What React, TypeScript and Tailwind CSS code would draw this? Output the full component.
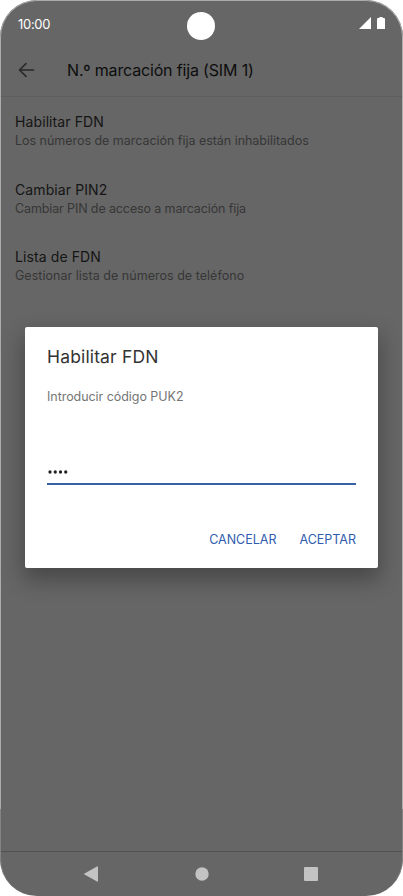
type Setting = {
  title: string
  summary: string
  summaryClass: string
}

const SETTINGS: Setting[] = [
  {
    title: 'Habilitar FDN',
    summary: 'Los números de marcación fija están inhabilitados',
    summaryClass: 'tracking-[-0.03px]',
  },
  {
    title: 'Cambiar PIN2',
    summary: 'Cambiar PIN de acceso a marcación fija',
    summaryClass: 'tracking-[-0.12px]',
  },
  {
    title: 'Lista de FDN',
    summary: 'Gestionar lista de números de teléfono',
    summaryClass: 'tracking-[0.03px]',
  },
]

function StatusBar() {
  return (
    <div className="flex h-12 shrink-0 items-center justify-between px-[18px] text-white">
      <span className="w-[60px] text-[13px] leading-4 tracking-[-0.3px]">10:00</span>
      <svg className="mt-[3px] size-7" viewBox="0 0 28 28" fill="currentColor">
        <circle cx="14" cy="14" r="14" />
      </svg>
      <span className="mt-[-2px] flex w-[61px] items-center justify-end gap-[6.5px]">
        <svg className="h-3 w-[12px]" viewBox="0 0 12 12" fill="currentColor">
          <path d="M12 0v12H0z" />
        </svg>
        <svg className="h-3 w-2" viewBox="0 0 8 12" fill="currentColor">
          <path d="M2.3 0h3.4v1H7q1 0 1 1v9.500q0 .5-.5.5h-7q-.5 0-.5-.5V2q0-1 1-1h1.300z" />
        </svg>
      </span>
    </div>
  )
}

function AppBar() {
  return (
    <header className="flex h-[49px] shrink-0 items-center border-b border-[#5e5e5e] pl-[18px]">
      <svg
        className="mt-[-5px] h-4 w-[17px] text-[#292929]"
        viewBox="0 0 17 16"
        fill="none"
        stroke="currentColor"
        strokeWidth="1.6"
        strokeLinecap="round"
        strokeLinejoin="round"
      >
        <path d="M15.500 8H2M8 1.600 1.500 8l6.500 6.400" />
      </svg>
      <h1 className="mt-[-4px] ml-8 text-[16px] leading-5 tracking-[-0.16px] whitespace-nowrap text-[#0d0d0d]">
        N.º marcación fija (SIM 1)
      </h1>
    </header>
  )
}

function Dialog() {
  return (
    <div className="absolute top-[326.5px] left-[25px] flex h-[241px] w-[353px] flex-col rounded-[2px] bg-white px-[22px] shadow-[0_10px_22px_2px_rgba(0,0,0,0.3)]">
      <h2 className="mt-[19px] text-[17.5px] leading-[22px] tracking-[0.15px] text-[#333]">Habilitar FDN</h2>
      <p className="mt-[21px] text-[12.5px] leading-4 tracking-[-0.05px] text-[#757575]">Introducir código PUK2</p>
      <div className="mt-[51px] flex h-[29px] w-[309px] items-end border-b-2 border-[#3860a6] pb-[9px]">
        <svg className="h-1 w-[22px] text-[#222]" viewBox="0 0 22 4" fill="currentColor">
          {[3, 8.25, 13.5, 18.75].map((cx) => (
            <circle key={cx} cx={cx} cy="2" r="1.65" />
          ))}
        </svg>
      </div>
      <div className="mt-[47px] flex justify-end gap-[23px] text-[12.5px] leading-4 text-[#2f5cae]">
        <button type="button">CANCELAR</button>
        <button type="button">ACEPTAR</button>
      </div>
    </div>
  )
}

function NavBar() {
  return (
    <nav className="flex h-[45px] shrink-0 items-center border-t border-[#525252] pb-px pl-[84px] text-[#c3c3c3]">
      <svg className="h-4 w-[14px]" viewBox="0 0 14 16" fill="currentColor">
        <path d="M13 .5q1-.5 1 .7v13.600q0 1.200-1 .7L.5 8.600q-.8-.6 0-1.200z" />
      </svg>
      <svg className="ml-[96.5px] size-[14px]" viewBox="0 0 14 14" fill="currentColor">
        <circle cx="7" cy="7" r="6.700" />
      </svg>
      <span className="ml-[95.5px] size-[14px] rounded-[1px] bg-[#c3c3c3]" />
    </nav>
  )
}

export default function App() {
  return (
    <div className="h-[896px] w-[403px] bg-white font-['Inter',sans-serif]">
      <div className="relative flex h-full flex-col overflow-hidden rounded-[37px] bg-[#666]">
        <StatusBar />
        <AppBar />
        <main className="flex-1 pt-[15px] pl-[15px]">
          {SETTINGS.map((s) => (
            <div key={s.title} className="h-[67.5px] whitespace-nowrap">
              <div className="text-[14px] leading-5 tracking-[0.1px] text-[#151515]">{s.title}</div>
              <div className={`text-[12.5px] leading-[18px] text-[#363636] ${s.summaryClass}`}>{s.summary}</div>
            </div>
          ))}
        </main>
        <NavBar />
        <Dialog />
        {/* Thin bezel highlight, fades out before the bottom corners */}
        <div className="pointer-events-none absolute inset-x-0 top-0 h-[809px] rounded-t-[37px] border-x border-t border-[#a9adab]" />
        <div className="pointer-events-none absolute inset-x-0 bottom-0 h-[87px] rounded-b-[37px] border-x border-[#838383]" />
      </div>
    </div>
  )
}
